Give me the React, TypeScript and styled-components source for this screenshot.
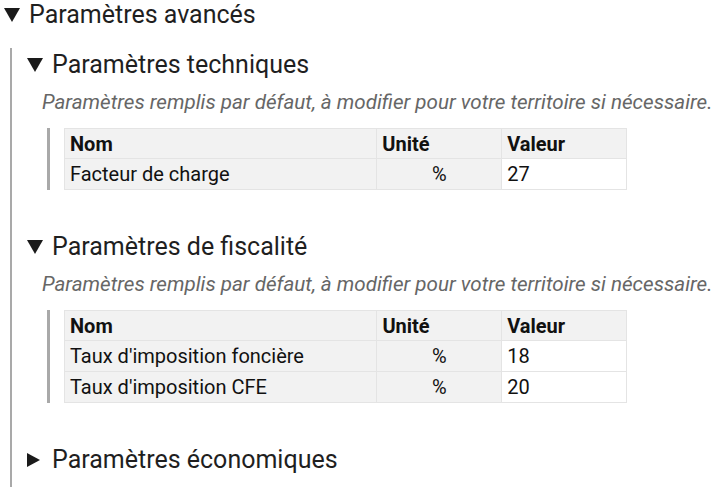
import React from "react";
import styled, { createGlobalStyle } from "styled-components";

const Global = createGlobalStyle`
  html, body { margin: 0; padding: 0; background: #ffffff; }
  body { font-family: Roboto, "Noto Sans", "Liberation Sans", sans-serif; color: #212121; }
`;

const Page = styled.div`
  padding: 0 0 0 4px;
  width: 720px;
  height: 487px;
  overflow: hidden;
  box-sizing: border-box;
`;

const Details = styled.details`
  margin: 0;
`;

const Summary = styled.summary<{ $h: number; $gap: number }>`
  list-style: none;
  display: flex;
  align-items: center;
  gap: ${(p) => p.$gap}px;
  height: ${(p) => p.$h}px;
  font-size: 25px;
  line-height: ${(p) => p.$h}px;
  color: #1f1f1f;
  cursor: pointer;
  white-space: nowrap;
  &::-webkit-details-marker { display: none; }
`;

const Body = styled.div`
  margin: 18px 0 0 6px;
  padding: 0 0 30px 15px;
  border-left: 2px solid #a9a9a9;
  display: flex;
  flex-direction: column;
`;

const Section = styled.details`
  margin: 0 0 40px 0;
  &:last-child { margin-bottom: 0; }
`;

const Description = styled.p`
  margin: 9px 0 0 15px;
  font-size: 20.6px;
  line-height: 24px;
  font-style: italic;
  color: #666666;
  white-space: nowrap;
`;

const Quote = styled.div`
  margin: 14px 0 0 20px;
  padding-left: 14px;
  border-left: 3px solid #a9a9a9;
`;

const Table = styled.table`
  border-collapse: collapse;
  width: 563px;
  font-size: 20px;
`;

const Th = styled.th<{ $w: number }>`
  width: ${(p) => p.$w}px;
  text-align: left;
  font-weight: 700;
  background: #f2f2f2;
  border: 1px solid #e4e4e4;
  padding: 0 5px;
  height: 30px;
  box-sizing: border-box;
  color: #111;
`;

const Td = styled.td<{ $kind: "name" | "unit" | "value" }>`
  background: ${(p) => (p.$kind === "value" ? "#ffffff" : "#f2f2f2")};
  text-align: ${(p) => (p.$kind === "unit" ? "center" : "left")};
  border: 1px solid #e4e4e4;
  padding: 0 5px;
  height: 31px;
  box-sizing: border-box;
  color: #111;
`;

const Arrow = ({ open }: { open: boolean }) =>
  open ? (
    <svg width="16" height="14" viewBox="0 0 16 14" aria-hidden>
      <polygon points="0,0 16,0 8,14" fill="#1a1a1a" />
    </svg>
  ) : (
    <svg width="16" height="14" viewBox="0 0 16 14" aria-hidden>
      <polygon points="0,0 13,7 0,14" fill="#1a1a1a" />
    </svg>
  );

type Row = { name: string; unit: string; value: string };

const ParamTable = ({ rows }: { rows: Row[] }) => (
  <Quote>
    <Table>
      <thead>
        <tr>
          <Th $w={313}>Nom</Th>
          <Th $w={125}>Unité</Th>
          <Th $w={125}>Valeur</Th>
        </tr>
      </thead>
      <tbody>
        {rows.map((r) => (
          <tr key={r.name}>
            <Td $kind="name">{r.name}</Td>
            <Td $kind="unit">{r.unit}</Td>
            <Td $kind="value">{r.value}</Td>
          </tr>
        ))}
      </tbody>
    </Table>
  </Quote>
);

const desc =
  "Paramètres remplis par défaut, à modifier pour votre territoire si nécessaire.";

export default function App() {
  return (
    <Page>
      <Global />
      <Details open>
        <Summary $h={30} $gap={9}>
          <Arrow open />
          Paramètres avancés
        </Summary>
        <Body>
          <Section open>
            <Summary $h={33} $gap={9}>
              <Arrow open />
              Paramètres techniques
            </Summary>
            <Description>{desc}</Description>
            <ParamTable rows={[{ name: "Facteur de charge", unit: "%", value: "27" }]} />
          </Section>
          <Section open>
            <Summary $h={33} $gap={9}>
              <Arrow open />
              Paramètres de fiscalité
            </Summary>
            <Description>{desc}</Description>
            <ParamTable
              rows={[
                { name: "Taux d'imposition foncière", unit: "%", value: "18" },
                { name: "Taux d'imposition CFE", unit: "%", value: "20" },
              ]}
            />
          </Section>
          <Section>
            <Summary $h={33} $gap={9}>
              <Arrow open={false} />
              Paramètres économiques
            </Summary>
          </Section>
        </Body>
      </Details>
    </Page>
  );
}
